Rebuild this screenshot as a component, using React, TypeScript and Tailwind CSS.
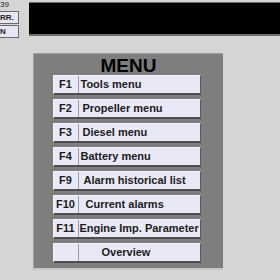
const items = [
  { key: 'F1', label: 'Tools menu', pad: 'pl-[2px]' },
  { key: 'F2', label: 'Propeller menu', pad: 'pl-[4px]' },
  { key: 'F3', label: 'Diesel menu', pad: 'pl-[4px]' },
  { key: 'F4', label: 'Battery menu', pad: 'pl-[2px]' },
  { key: 'F9', label: 'Alarm historical list', pad: 'pl-[5px]' },
  { key: 'F10', label: 'Current alarms', pad: 'pl-[7px]' },
  { key: 'F11', label: 'Engine Imp. Parameter', pad: 'pl-[1px]' },
  { key: '', label: 'Overview', pad: 'pl-[23px]' },
];

function MenuRow({ k, label, pad }: { k: string; label: string; pad: string }) {
  return (
    <div className="flex h-[20px] w-[148px] bg-[#e8e8f7] border-t border-l border-[#f4f4fc] border-b-2 border-r border-b-[#4e4e4e] border-r-[#5a5a5a] text-[11px] font-bold text-[#1b1b1b]">
      <div className="w-[25px] shrink-0 flex items-center justify-center border-r border-[#9a9aa6]">{k}</div>
      <div className={`flex-1 flex items-center whitespace-nowrap ${pad}`}>{label}</div>
    </div>
  );
}

export default function App() {
  return (
    <div className="w-[280px] h-[280px] bg-[#d5d5d5] overflow-hidden" style={{ fontFamily: '"Liberation Sans", Arial, sans-serif' }}>
      <div className="flex h-[40px]">
        <div className="w-[29px] shrink-0 flex flex-col">
          <div className="h-[11px] text-[8px] leading-[10px] text-[#222]">39</div>
          <div className="w-[19px] h-[13px] bg-[#e6e6f4] border border-[#6b6b6b] border-l-0 flex items-center text-[8px] font-bold text-[#222]">RR.</div>
          <div className="w-[19px] h-[13px] mt-[1px] bg-[#e6e6f4] border border-[#6b6b6b] border-l-0 flex items-center text-[8px] font-bold text-[#222]">N</div>
        </div>
        <div className="flex-1 mt-[2px] h-[34px] bg-black border-t border-[#6e6e6e] border-b-2 border-b-[#707070]" />
      </div>
      <div className="ml-[33px] mt-[13px] w-[190px] h-[217px] bg-[#7e7e7e] border-t border-l border-[#a0a0a0] border-b-2 border-b-[#c8c8c8] flex flex-col items-center">
        <div className="text-[19px] leading-[19px] font-bold text-black mt-[2px] h-[19px]">MENU</div>
        <div className="flex flex-col gap-[4px] -ml-[4px]">
          {items.map((it) => (
            <MenuRow key={it.label} k={it.key} label={it.label} pad={it.pad} />
          ))}
        </div>
      </div>
    </div>
  );
}
